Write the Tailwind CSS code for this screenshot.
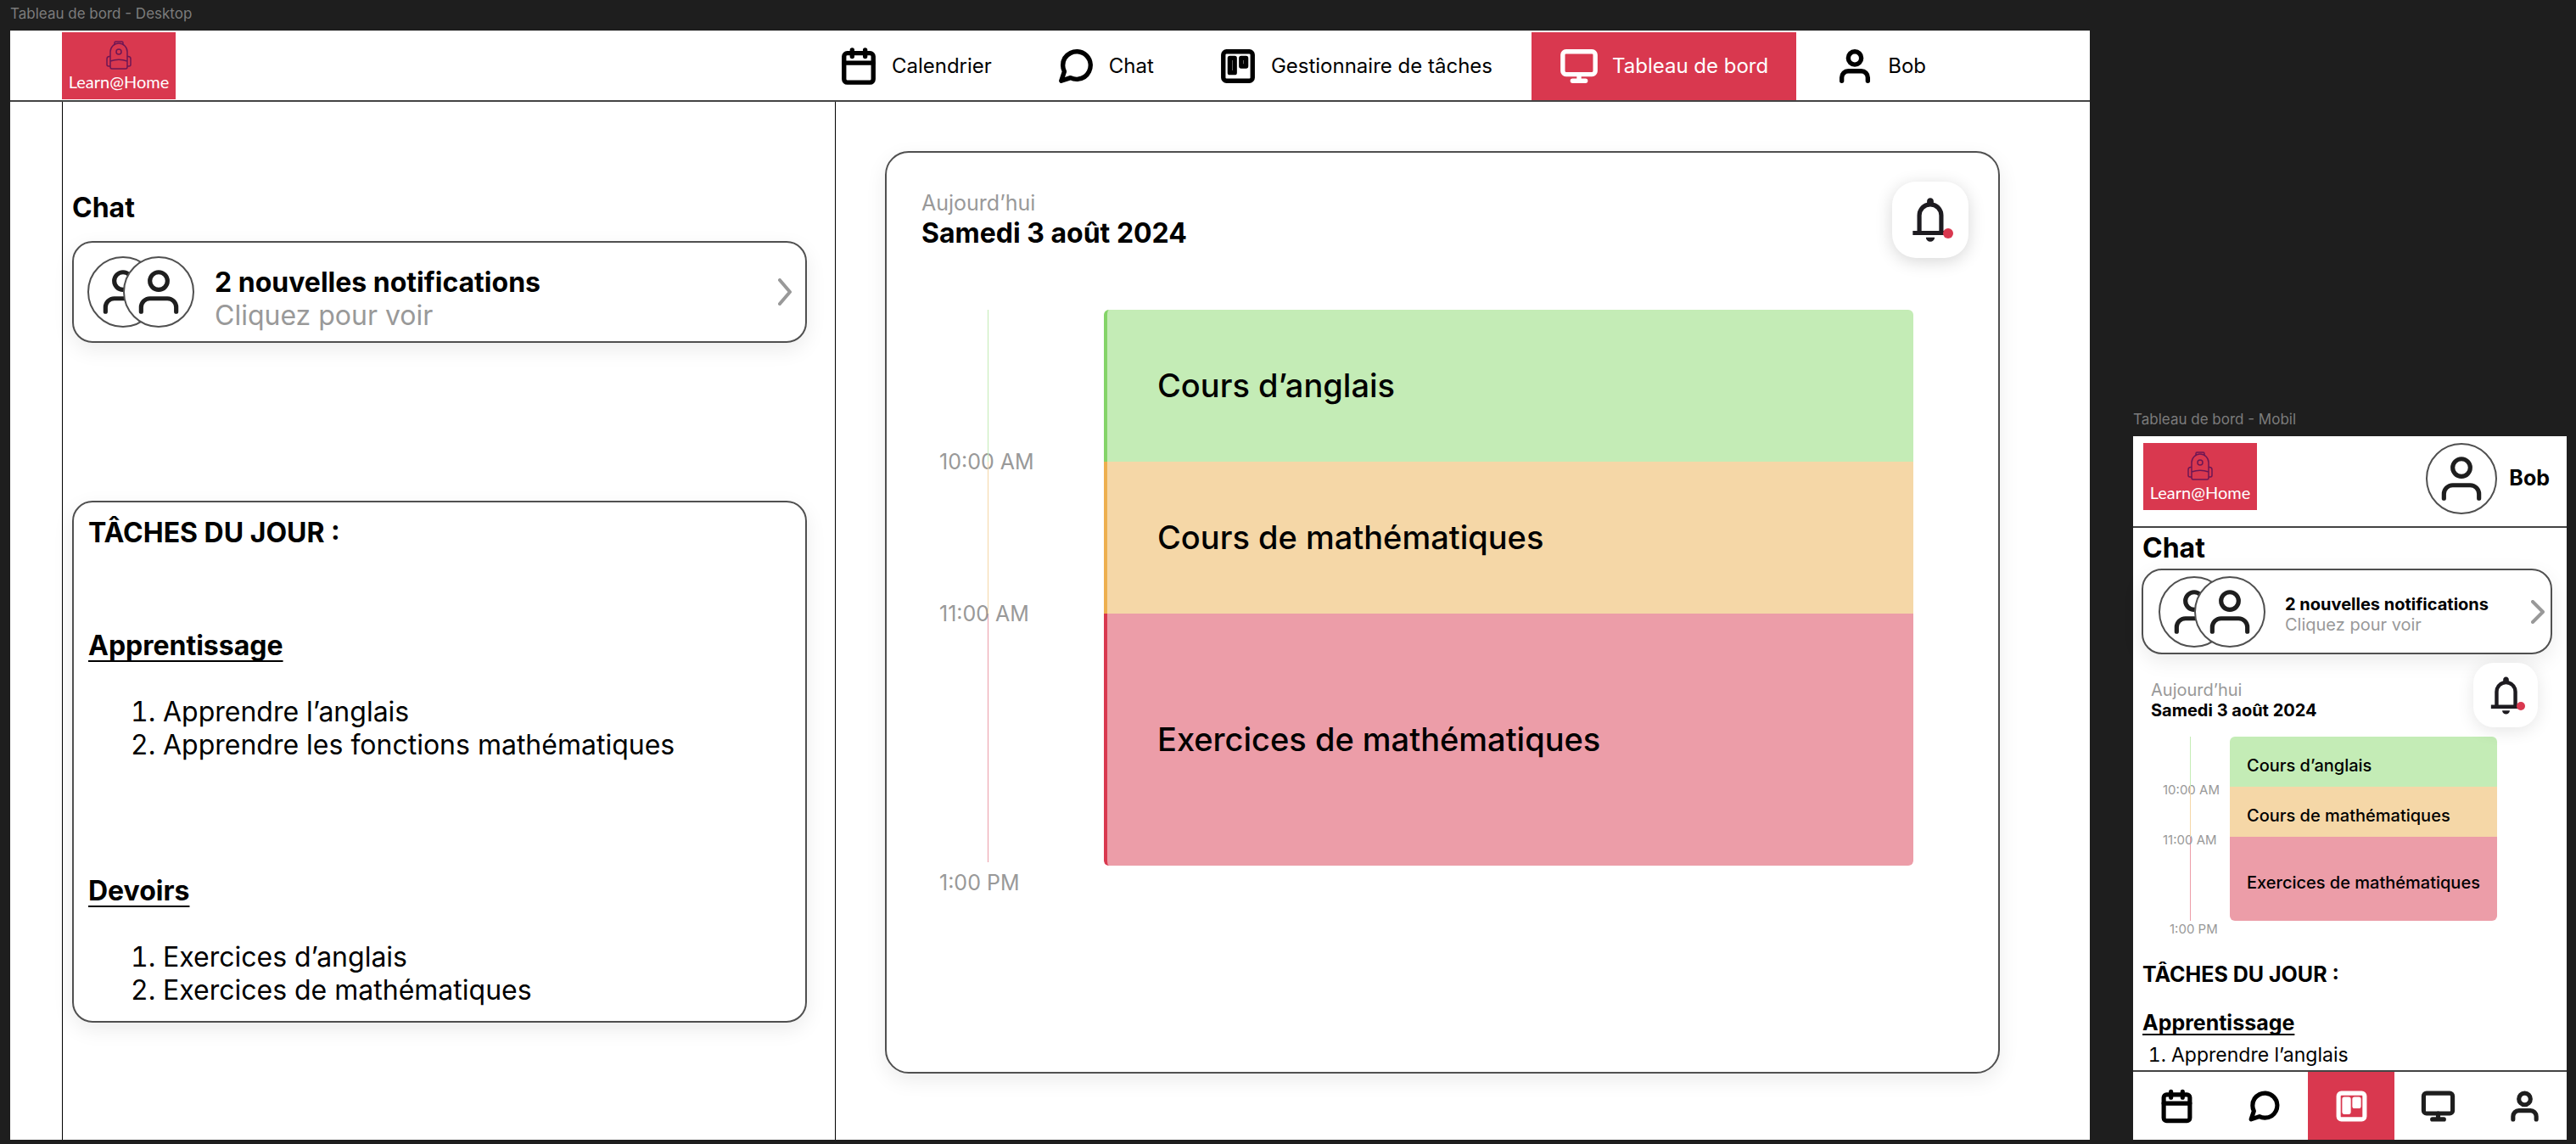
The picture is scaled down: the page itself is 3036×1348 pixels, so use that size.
<!DOCTYPE html>
<html lang="fr">
<head>
<meta charset="utf-8">
<title>Learn@Home - Tableau de bord</title>
<script src="https://cdn.jsdelivr.net/npm/@tailwindcss/browser@4"></script>
</head>
<body class="bg-[#1e1e1e] font-['Inter',sans-serif] text-black">

<!-- Shared icons -->
<svg class="hidden" aria-hidden="true">
  <symbol id="i-calendar" viewBox="0 0 24 24" overflow="visible"><rect x="3" y="4" width="18" height="18" rx="2"/><path d="M16 2v4M8 2v4M3 10h18"/></symbol>
  <symbol id="i-chat" viewBox="0 0 24 24" overflow="visible"><path d="M21 11.5a8.38 8.38 0 0 1-.9 3.8 8.5 8.5 0 0 1-7.6 4.7 8.38 8.38 0 0 1-3.8-.9L3 21l1.900-5.700a8.380 8.380 0 0 1-.9-3.800 8.500 8.500 0 0 1 4.700-7.600 8.380 8.380 0 0 1 3.800-.9h.5a8.480 8.480 0 0 1 8 8v.5z"/></symbol>
  <symbol id="i-board" viewBox="0 0 24 24" overflow="visible"><rect x="3" y="3" width="18" height="18" rx="2"/><rect x="7" y="7" width="3" height="9"/><rect x="14" y="7" width="3" height="5"/></symbol>
  <symbol id="i-monitor" viewBox="0 0 24 24" overflow="visible"><rect x="2" y="3" width="20" height="14" rx="2"/><path d="M8 21h8M12 17v4"/></symbol>
  <symbol id="i-user" viewBox="0 0 24 24" overflow="visible"><path d="M20 21v-2a4 4 0 0 0-4-4H8a4 4 0 0 0-4 4v2"/><circle cx="12" cy="7" r="4"/></symbol>
  <symbol id="i-chevron" viewBox="0 0 16 32" overflow="visible"><path d="M2 2l12 14-12 14"/></symbol>
  <symbol id="i-bell" viewBox="0 -960 960 960"><path d="M160-200v-80h80v-280q0-83 50-147.500T420-792v-28q0-25 17.500-42.500T480-880t42.500 17.500T540-820v28q80 20 130 84.500T720-560v280h80v80H160Zm320 120q-33 0-56.500-23.500T400-160h160q0 33-23.500 56.500T480-80ZM320-280h320v-280q0-66-47-113t-113-47q-66 0-113 47t-47 113v280Z"/></symbol>
  <symbol id="i-bag" viewBox="0 0 30 34"><path d="M5 31V13a10 10 0 0 1 20 0v18a2 2 0 0 1-2 2H7a2 2 0 0 1-2-2zM10 5V2.500A1.500 1.500 0 0 1 11.500 1h7A1.500 1.500 0 0 1 20 2.500V5M5 24q10-3.500 20 0M5 18.500H4A3 3 0 0 0 1 21.500V28a2 2 0 0 0 2 2h2M25 18.500h1a3 3 0 0 1 3 3V28a2 2 0 0 1-2 2h-2"/><circle cx="15" cy="13" r="3"/></symbol>
</svg>

<div class="grid min-h-screen grid-cols-[2451fr_511fr] gap-x-[51px] pr-[11px] pb-[5px] pl-3">

  <!-- Desktop frame -->
  <section class="flex flex-col">
    <p class="h-9 pt-1.5 text-[17px] leading-5 text-[#7c7c7c]">Tableau de bord - Desktop</p>
    <div class="flex flex-1 flex-col bg-white">
      <header class="flex h-[84px] items-stretch justify-between border-b-2 border-[#444] pt-0.5 pr-[163px] pl-[61px]">
        <a href="#" class="flex h-[79px] w-[134px] flex-col items-center bg-[#d9384f] pt-2.5 text-white">
          <svg class="h-[34px] w-[30px] fill-none stroke-[#6d1654] stroke-[1.5]"><use href="#i-bag"/></svg>
          <span class="font-['Lato',sans-serif] text-xl leading-7">Learn@Home</span>
        </a>
        <nav class="flex gap-4 text-2xl">
          <a href="#" class="flex items-center gap-4 px-[30px]"><svg class="size-[46px] fill-none stroke-current stroke-[2.8] [stroke-linecap:round] [stroke-linejoin:round]"><use href="#i-calendar"/></svg>Calendrier</a>
          <a href="#" class="flex items-center gap-4 px-[30px]"><svg class="size-[46px] fill-none stroke-current stroke-[2.8] [stroke-linecap:round] [stroke-linejoin:round]"><use href="#i-chat"/></svg>Chat</a>
          <a href="#" class="flex items-center gap-4 px-[30px]"><svg class="size-[46px] fill-none stroke-current stroke-[2.8] [stroke-linecap:round] [stroke-linejoin:round]"><use href="#i-board"/></svg>Gestionnaire de tâches</a>
          <a href="#" aria-current="page" class="flex items-center gap-4 bg-[#d9384f] px-[33px] text-white"><svg class="size-[46px] fill-none stroke-current stroke-[2.8] [stroke-linecap:round] [stroke-linejoin:round]"><use href="#i-monitor"/></svg>Tableau de bord</a>
          <a href="#" class="flex items-center gap-4 px-[30px]"><svg class="size-[46px] fill-none stroke-current stroke-[2.8] [stroke-linecap:round] [stroke-linejoin:round]"><use href="#i-user"/></svg>Bob</a>
        </nav>
      </header>

      <div class="grid flex-1 grid-cols-[973fr_1478fr]">
        <div class="ml-[61px] flex flex-col border-x border-black pt-[105px] pr-[33px] pb-[138px] pl-[11px]">
          <h2 class="text-[32px] leading-[39px] font-bold">Chat</h2>
          <a href="#" class="mt-5 flex h-[120px] items-center rounded-3xl border-2 border-[#505050] px-4 shadow-[0_8px_24px_rgba(0,0,0,0.08)]">
            <span class="flex size-[84px] items-center justify-center rounded-full border-2 border-[#505050] bg-white"><svg class="size-[62px] fill-none stroke-[#1e1e1e] stroke-2 [stroke-linecap:round] [stroke-linejoin:round]"><use href="#i-user"/></svg></span>
            <span class="z-10 -ml-[42px] flex size-[84px] items-center justify-center rounded-full border-2 border-[#505050] bg-white"><svg class="size-[62px] fill-none stroke-[#1e1e1e] stroke-2 [stroke-linecap:round] [stroke-linejoin:round]"><use href="#i-user"/></svg></span>
            <span class="ml-6 flex flex-1 flex-col pt-4 text-[32px] leading-[39px]"><strong>2 nouvelles notifications</strong><span class="text-[#999]">Cliquez pour voir</span></span>
            <svg class="h-8 w-4 fill-none stroke-[#999] stroke-[4] [stroke-linecap:round] [stroke-linejoin:round]"><use href="#i-chevron"/></svg>
          </a>

          <section class="mt-[186px] flex-1 rounded-3xl border-2 border-[#505050] pt-4 pl-[17px] text-[32px] leading-[39px] shadow-[0_8px_24px_rgba(0,0,0,0.08)]">
            <h2 class="font-bold">TÂCHES DU JOUR :</h2>
            <h3 class="mt-[94px] font-bold underline decoration-2 underline-offset-[6px] [text-decoration-skip-ink:none]">Apprentissage</h3>
            <ol class="mt-[39px] list-decimal pl-[88px]"><li>Apprendre l’anglais</li><li>Apprendre les fonctions mathématiques</li></ol>
            <h3 class="mt-[133px] font-bold underline decoration-2 underline-offset-[6px] [text-decoration-skip-ink:none]">Devoirs</h3>
            <ol class="mt-[39px] list-decimal pl-[88px]"><li>Exercices d’anglais</li><li>Exercices de mathématiques</li></ol>
          </section>
        </div>

        <div class="flex pt-[58px] pr-[106px] pb-[78px] pl-[58px]">
          <section class="flex-1 rounded-[28px] border-2 border-[#505050] pt-[34px] shadow-[0_8px_24px_rgba(0,0,0,0.08)]">
            <div class="flex items-start justify-between pr-[35px] pl-[41px]">
              <div class="pt-[9px]">
                <p class="text-[25px] leading-8 text-[#999]">Aujourd’hui</p>
                <h2 class="text-[32px] leading-[39px] font-bold">Samedi 3 août 2024</h2>
              </div>
              <button type="button" aria-label="Notifications" class="relative flex size-[90px] items-center justify-center rounded-[28px] bg-white shadow-[0_4px_20px_rgba(0,0,0,0.16)]">
                <svg class="size-[62px] fill-[#1d1b20]"><use href="#i-bell"/></svg>
                <span class="absolute right-[18px] bottom-[23px] size-3 rounded-full bg-[#d9384f]"></span>
              </button>
            </div>
            <div class="mt-[61px] grid grid-cols-[194px_1fr] grid-rows-[179px_179px_297px_auto] pr-[100px] pl-[62px] text-[25px] leading-8 text-[#999]">
              <time class="relative flex items-end"><span class="absolute inset-y-0 left-[57px] w-px bg-[#c4ecb6]"></span><span class="-mb-4">10:00 AM</span></time>
              <div class="flex items-center rounded-t-md border-l-4 border-[#84d468] bg-[#c4ecb6] pb-0.5 pl-[59px] text-[38px] font-medium text-black">Cours d’anglais</div>
              <time class="relative flex items-end"><span class="absolute inset-y-0 left-[57px] w-px bg-[#f5d7a7]"></span><span class="-mb-4">11:00 AM</span></time>
              <div class="flex items-center border-l-4 border-[#edaf4f] bg-[#f5d7a7] pb-0.5 pl-[59px] text-[38px] font-medium text-black">Cours de mathématiques</div>
              <div class="mb-1 ml-[57px] w-px bg-[#ec9da8]"></div>
              <div class="flex items-center rounded-b-md border-l-4 border-[#d9384f] bg-[#ec9da8] pb-0.5 pl-[59px] text-[38px] font-medium text-black">Exercices de mathématiques</div>
              <time class="pt-1">1:00 PM</time>
            </div>
          </section>
        </div>
      </div>
    </div>
  </section>

  <!-- Mobile frame -->
  <section class="flex flex-col self-end">
    <p class="h-9 pt-1.5 text-[17px] leading-5 text-[#7c7c7c]">Tableau de bord - Mobil</p>
    <div class="flex flex-col bg-white">
      <header class="flex h-[108px] items-start justify-between border-b-2 border-[#444] pt-2 pr-5 pl-3">
        <a href="#" class="flex h-[79px] w-[134px] flex-col items-center bg-[#d9384f] pt-2.5 text-white">
          <svg class="h-[34px] w-[30px] fill-none stroke-[#6d1654] stroke-[1.5]"><use href="#i-bag"/></svg>
          <span class="font-['Lato',sans-serif] text-xl leading-7">Learn@Home</span>
        </a>
        <a href="#" class="flex items-center gap-3.5 text-[25px] font-bold">
          <span class="flex size-[84px] items-center justify-center rounded-full border-2 border-[#505050]"><svg class="size-[62px] fill-none stroke-[#1e1e1e] stroke-2 [stroke-linecap:round] [stroke-linejoin:round]"><use href="#i-user"/></svg></span>
          Bob
        </a>
      </header>

      <h2 class="mt-1 pl-[11px] text-[32px] leading-[39px] font-bold">Chat</h2>
      <a href="#" class="mt-[5px] mr-[17px] ml-2.5 flex h-[101px] items-center rounded-3xl border-2 border-[#505050] pr-[7px] pl-[18px] shadow-[0_8px_24px_rgba(0,0,0,0.08)]">
        <span class="flex size-[84px] items-center justify-center rounded-full border-2 border-[#505050] bg-white"><svg class="size-[62px] fill-none stroke-[#1e1e1e] stroke-2 [stroke-linecap:round] [stroke-linejoin:round]"><use href="#i-user"/></svg></span>
        <span class="z-10 -ml-[42px] flex size-[84px] items-center justify-center rounded-full border-2 border-[#505050] bg-white"><svg class="size-[62px] fill-none stroke-[#1e1e1e] stroke-2 [stroke-linecap:round] [stroke-linejoin:round]"><use href="#i-user"/></svg></span>
        <span class="ml-[23px] flex flex-1 flex-col pt-1.5 text-xl leading-6"><strong>2 nouvelles notifications</strong><span class="text-[#999]">Cliquez pour voir</span></span>
        <svg viewBox="0 0 16 28" class="h-7 w-4 fill-none stroke-[#999] stroke-[4] [stroke-linecap:round] [stroke-linejoin:round]"><path d="M2 2l12 12-12 12"/></svg>
      </a>

      <div class="mt-2.5 flex items-start justify-between pr-[34px] pl-[21px]">
        <div class="pt-5 text-xl leading-6">
          <p class="text-[#999]">Aujourd’hui</p>
          <h2 class="font-bold">Samedi 3 août 2024</h2>
        </div>
        <button type="button" aria-label="Notifications" class="relative flex size-[76px] items-center justify-center rounded-3xl bg-white shadow-[0_4px_20px_rgba(0,0,0,0.10)]">
          <svg class="size-[53px] fill-[#1d1b20]"><use href="#i-bell"/></svg>
          <span class="absolute right-[15px] bottom-5 size-2.5 rounded-full bg-[#d9384f]"></span>
        </button>
      </div>

      <div class="mt-[11px] grid grid-cols-[79px_1fr] grid-rows-[59px_59px_99px_auto] pr-[82px] pl-[35px] text-[15px] leading-5 text-[#999]">
        <time class="relative flex items-end"><span class="absolute inset-y-0 left-8 w-px bg-[#c4ecb6]"></span><span class="-mb-3.5">10:00 AM</span></time>
        <div class="flex items-center rounded-t-md bg-[#c4ecb6] pt-2 pl-5 text-xl font-medium text-black">Cours d’anglais</div>
        <time class="relative flex items-end"><span class="absolute inset-y-0 left-8 w-px bg-[#f5d7a7]"></span><span class="-mb-3.5">11:00 AM</span></time>
        <div class="flex items-center bg-[#f5d7a7] pt-2 pl-5 text-xl font-medium text-black">Cours de mathématiques</div>
        <div class="ml-8 w-px bg-[#ec9da8]"></div>
        <div class="flex items-center rounded-b-md bg-[#ec9da8] pt-2 pl-5 text-xl font-medium whitespace-nowrap text-black">Exercices de mathématiques</div>
        <time class="pl-2">1:00 PM</time>
      </div>

      <section class="mt-7 h-32 overflow-hidden pl-[11px] text-[25px] leading-[31px]">
        <h2 class="font-bold">TÂCHES DU JOUR :</h2>
        <h3 class="mt-[26px] font-bold underline decoration-2 underline-offset-4 [text-decoration-skip-ink:none]">Apprentissage</h3>
        <ol class="mt-2 list-decimal pl-[34px] text-[23px] leading-7"><li>Apprendre l’anglais</li></ol>
      </section>

      <nav class="grid h-[82px] grid-cols-[102fr_104fr_102fr_103fr_100fr] border-t-2 border-[#444]">
        <a href="#" aria-label="Calendrier" class="flex items-center justify-center"><svg class="size-[41px] fill-none stroke-current stroke-3 [stroke-linecap:round] [stroke-linejoin:round]"><use href="#i-calendar"/></svg></a>
        <a href="#" aria-label="Chat" class="flex items-center justify-center"><svg class="size-[41px] fill-none stroke-current stroke-3 [stroke-linecap:round] [stroke-linejoin:round]"><use href="#i-chat"/></svg></a>
        <a href="#" aria-label="Gestionnaire de tâches" aria-current="page" class="flex items-center justify-center bg-[#d9384f] text-white"><svg class="size-[41px] fill-none stroke-current stroke-3 [stroke-linecap:round] [stroke-linejoin:round]"><use href="#i-board"/></svg></a>
        <a href="#" aria-label="Tableau de bord" class="flex items-center justify-center text-[#1e1e1e]"><svg class="size-[41px] fill-none stroke-current stroke-3 [stroke-linecap:round] [stroke-linejoin:round]"><use href="#i-monitor"/></svg></a>
        <a href="#" aria-label="Bob" class="flex items-center justify-center text-[#1e1e1e]"><svg class="size-[41px] fill-none stroke-current stroke-3 [stroke-linecap:round] [stroke-linejoin:round]"><use href="#i-user"/></svg></a>
      </nav>
    </div>
  </section>
</div>
</body>
</html>
